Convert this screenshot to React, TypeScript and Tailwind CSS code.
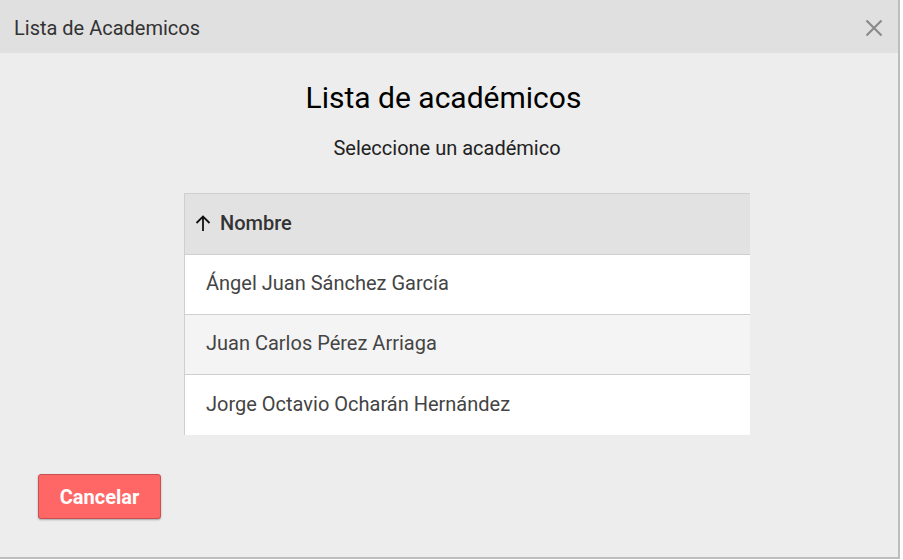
import React from "react";

export default function App() {
  const rows = [
    "Ángel Juan Sánchez García",
    "Juan Carlos Pérez Arriaga",
    "Jorge Octavio Ocharán Hernández",
  ];
  return (
    <div className="w-[903px] h-[560px] bg-white" style={{ fontFamily: "Roboto, 'Liberation Sans', sans-serif" }}>
      <div className="w-[900px] h-[559px] bg-[#ededed] flex flex-col border-r-2 border-b-2 border-[#bdbdbd]">
        <div className="h-[53px] bg-[#e0e0e0] flex items-center justify-between pl-[14px] pr-[15px] shrink-0">
          <span className="text-[20px] text-[#333333] mt-[2px]">Lista de Academicos</span>
          <svg width="18" height="18" viewBox="0 0 18 18" className="mt-[2px]">
            <path d="M1.5 1.5 L16.5 16.5 M16.5 1.5 L1.5 16.5" stroke="#8a8a8a" strokeWidth="2.2" />
          </svg>
        </div>
        <div className="flex flex-col items-center pt-[28px]">
          <h1 className="text-[30px] leading-[34px] text-black ml-[-11px]">Lista de académicos</h1>
          <p className="text-[20px] leading-[24px] text-[#222] mt-[21px] ml-[-4px]">Seleccione un académico</p>
        </div>
        <div className="ml-[184px] mt-[33px] w-[566px]">
          <div className="h-[62px] bg-[#e2e2e2] border-t border-b border-l border-[#cfcfcf] flex items-center pl-[9px] pb-[2px] gap-[8px]">
            <svg width="18" height="18" viewBox="0 0 18 18">
              <path d="M9 17 V2.5 M2.5 9 L9 2.5 L15.5 9" stroke="#111" strokeWidth="1.8" fill="none" />
            </svg>
            <span className="text-[20px] font-medium text-[#333]">Nombre</span>
          </div>
          {rows.map((r, i) => (
            <div
              key={r}
              className={`h-[60px] flex items-center pl-[21px] pb-[3px] border-l border-[#cfcfcf] ${i < rows.length - 1 ? "border-b" : ""} ${i === 1 ? "bg-[#f4f4f4]" : "bg-white"}`}
            >
              <span className="text-[20px] text-[#444]">{r}</span>
            </div>
          ))}
        </div>
        <div className="pl-[38px] mt-[39px]">
          <button className="w-[123px] h-[45px] bg-[#ff6666] border border-[#c95050] rounded-[3px] text-white font-bold text-[20px] shadow-[0_1px_2px_rgba(0,0,0,0.3)]">
            Cancelar
          </button>
        </div>
      </div>
    </div>
  );
}
